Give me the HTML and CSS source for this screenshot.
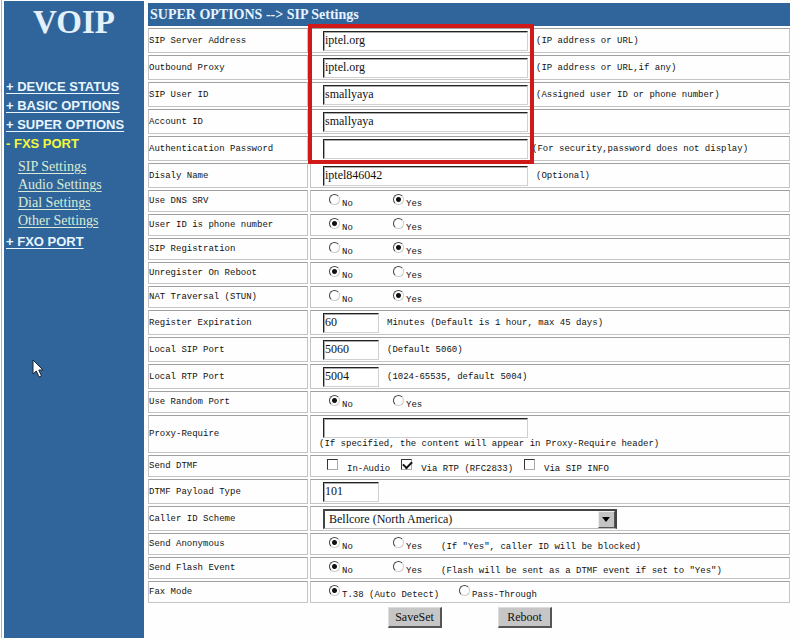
FILE: index.html
```
<!DOCTYPE html>
<html lang="en">

<head>
    <meta charset="utf-8">
    <title>VOIP - SIP Settings</title>
    <meta name="viewport" content="width=device-width, initial-scale=1">
    <link rel="stylesheet" href="styles.css">
</head>

<body>
    <div class="sidebar">
        <h1>VOIP</h1>
        <ul class="menu">
            <li><a href="#">+ DEVICE STATUS</a></li>
            <li><a href="#">+ BASIC OPTIONS</a></li>
            <li><a href="#">+ SUPER OPTIONS</a></li>
            <li><a href="#" class="current">- FXS PORT</a>
                <ul class="submenu">
                    <li><a href="#">SIP Settings</a></li>
                    <li><a href="#">Audio Settings</a></li>
                    <li><a href="#">Dial Settings</a></li>
                    <li><a href="#">Other Settings</a></li>
                </ul>
            </li>
            <li><a href="#">+ FXO PORT</a></li>
        </ul>
        <svg class="pointer" width="12" height="20" viewBox="0 0 12 20">
            <path d="M1 1v14l3.300-3 2.700 6 2.500-1-2.700-6H11z" fill="#fff" stroke="#1c2430" stroke-width="1" />
        </svg>
    </div>

    <form class="main" onsubmit="return false">
        <table class="settings">
            <tr>
                <th colspan="2">SUPER OPTIONS --&gt; SIP Settings</th>
            </tr>
            <tr class="field">
                <td><label for="server">SIP Server Address</label></td>
                <td><input type="text" class="long" id="server" value="iptel.org"><span class="hint">(IP address or URL)</span></td>
            </tr>
            <tr class="field">
                <td><label for="proxy">Outbound Proxy</label></td>
                <td><input type="text" class="long" id="proxy" value="iptel.org"><span class="hint">(IP address or URL,if any)</span></td>
            </tr>
            <tr class="field">
                <td><label for="user">SIP User ID</label></td>
                <td><input type="text" class="long" id="user" value="smallyaya"><span class="hint">(Assigned user ID or phone number)</span></td>
            </tr>
            <tr class="field">
                <td><label for="account">Account ID</label></td>
                <td><input type="text" class="long" id="account" value="smallyaya"></td>
            </tr>
            <tr class="field">
                <td><label for="password">Authentication Password</label></td>
                <td><input type="password" class="long" id="password"><span class="hint near">(For security,password does not display)</span></td>
            </tr>
            <tr class="field">
                <td><label for="name">Disaly Name</label></td>
                <td><input type="text" class="long" id="name" value="iptel846042"><span class="hint">(Optional)</span></td>
            </tr>
            <tr class="choice">
                <td>Use DNS SRV</td>
                <td>
                    <label><input type="radio" name="dns">No</label>
                    <label><input type="radio" name="dns" checked>Yes</label>
                </td>
            </tr>
            <tr class="choice">
                <td>User ID is phone number</td>
                <td>
                    <label><input type="radio" name="phone" checked>No</label>
                    <label><input type="radio" name="phone">Yes</label>
                </td>
            </tr>
            <tr class="choice">
                <td>SIP Registration</td>
                <td>
                    <label><input type="radio" name="register">No</label>
                    <label><input type="radio" name="register" checked>Yes</label>
                </td>
            </tr>
            <tr class="choice">
                <td>Unregister On Reboot</td>
                <td>
                    <label><input type="radio" name="unregister" checked>No</label>
                    <label><input type="radio" name="unregister">Yes</label>
                </td>
            </tr>
            <tr class="choice">
                <td>NAT Traversal (STUN)</td>
                <td>
                    <label><input type="radio" name="nat">No</label>
                    <label><input type="radio" name="nat" checked>Yes</label>
                </td>
            </tr>
            <tr class="field">
                <td><label for="expiration">Register Expiration</label></td>
                <td><input type="text" class="short" id="expiration" value="60"><span class="hint">Minutes (Default is 1 hour, max 45 days)</span></td>
            </tr>
            <tr class="field">
                <td><label for="sipport">Local SIP Port</label></td>
                <td><input type="text" class="short" id="sipport" value="5060"><span class="hint">(Default 5060)</span></td>
            </tr>
            <tr class="field">
                <td><label for="rtpport">Local RTP Port</label></td>
                <td><input type="text" class="short" id="rtpport" value="5004"><span class="hint">(1024-65535, default 5004)</span></td>
            </tr>
            <tr class="choice">
                <td>Use Random Port</td>
                <td>
                    <label><input type="radio" name="random" checked>No</label>
                    <label><input type="radio" name="random">Yes</label>
                </td>
            </tr>
            <tr class="require">
                <td><label for="require">Proxy-Require</label></td>
                <td>
                    <input type="text" class="long" id="require">
                    <p>(If specified, the content will appear in Proxy-Require header)</p>
                </td>
            </tr>
            <tr class="choice checks">
                <td>Send DTMF</td>
                <td>
                    <label><input type="checkbox">In-Audio</label>
                    <label><input type="checkbox" checked>Via RTP (RFC2833)</label>
                    <label><input type="checkbox">Via SIP INFO</label>
                </td>
            </tr>
            <tr class="field">
                <td><label for="payload">DTMF Payload Type</label></td>
                <td><input type="text" class="short" id="payload" value="101"></td>
            </tr>
            <tr class="field">
                <td><label for="scheme">Caller ID Scheme</label></td>
                <td>
                    <div class="select">
                        <select id="scheme">
                            <option>Bellcore (North America)</option>
                        </select>
                        <span class="arrow"></span>
                    </div>
                </td>
            </tr>
            <tr class="choice">
                <td>Send Anonymous</td>
                <td>
                    <label><input type="radio" name="anonymous" checked>No</label>
                    <label><input type="radio" name="anonymous">Yes</label>
                    <span>(If "Yes", caller ID will be blocked)</span>
                </td>
            </tr>
            <tr class="choice">
                <td>Send Flash Event</td>
                <td>
                    <label><input type="radio" name="flash" checked>No</label>
                    <label><input type="radio" name="flash">Yes</label>
                    <span>(Flash will be sent as a DTMF event if set to "Yes")</span>
                </td>
            </tr>
            <tr class="choice fax">
                <td>Fax Mode</td>
                <td>
                    <label><input type="radio" name="fax" checked>T.38 (Auto Detect)</label>
                    <label><input type="radio" name="fax">Pass-Through</label>
                </td>
            </tr>
        </table>
        <div class="buttons">
            <button type="submit">SaveSet</button>
            <button type="button">Reboot</button>
        </div>
        <div class="highlight"></div>
    </form>
</body>

</html>
```
FILE: styles.css
```
* {
    margin: 0;
    padding: 0;
    box-sizing: border-box;
}

body {
    display: flex;
    min-height: 100vh;
    margin-left: 1px;
    border-left: 1px solid #a9b4b8;
    background: #fefefe;
    color: #111;
    font-family: "Liberation Mono", monospace;
    font-size: 9px;
}

ul {
    list-style: none;
}

/* left menu */
.sidebar {
    position: relative;
    flex: 0 0 140px;
    margin: 1px 0 0 2px;
    background: #30659b;
}

.sidebar h1 {
    height: 76px;
    color: #e4f0fc;
    font: bold 33px/42px "Liberation Serif", serif;
    text-align: center;
}

.menu {
    padding-left: 2px;
    font: bold 13px/19px "Liberation Sans", sans-serif;
}

.menu a {
    color: #e8f6ff;
    text-decoration-thickness: 1px;
    text-underline-offset: 2px;
}

.menu a.current {
    color: #f4f83a;
    text-decoration: none;
}

.submenu {
    padding: 5px 0 2px 12px;
    font: 14px/18px "Liberation Serif", serif;
}

.submenu a {
    color: #d9ecd3;
}

.pointer {
    position: absolute;
    top: 358px;
    left: 28px;
}

/* settings table */
.main {
    position: relative;
    flex: 1;
    padding: 1px 8px 8px 2px;
}

.settings {
    width: 100%;
    border-spacing: 2px;
}

.settings th {
    height: 23px;
    padding-left: 2px;
    background: #30659b;
    color: #e8f4ff;
    font: bold 14px/20px "Liberation Serif", serif;
    text-align: left;
}

.settings td {
    height: 25px;
    border: 1px solid #c4c4c4;
    border-top-color: #a0a0a0;
    line-height: 12px;
    vertical-align: middle;
    white-space: nowrap;
}

.settings td:first-child {
    width: 160px;
}

.settings td:last-child {
    padding-left: 12px;
}

.settings .choice td {
    height: 22px;
}

.settings .require td {
    height: 38px;
}

.settings .require td:last-child {
    padding-left: 8px;
}

.require input {
    margin-left: 4px;
}

input[type=text],
input[type=password] {
    display: inline-block;
    height: 20px;
    padding-left: 1px;
    border: 1px solid #d0d0d0;
    border-top-color: #222;
    border-left-color: #222;
    background: #fff;
    box-shadow: inset 1px 1px #aaa;
    color: #111;
    font: 12px/16px "Liberation Serif", serif;
    vertical-align: middle;
}

input.long {
    width: 205px;
}

input.short {
    width: 56px;
}

.hint {
    margin-left: 8px;
    vertical-align: middle;
}

.hint.near {
    margin-left: 4px;
}

/* radio and checkbox rows */
.choice td:last-child {
    padding-left: 18px;
    font-size: 0;
}

.choice label,
.choice span {
    display: inline-flex;
    align-items: flex-end;
    gap: 2px;
    min-width: 64px;
    height: 16px;
    font-size: 9px;
    line-height: 10px;
    vertical-align: middle;
}

.choice label + label {
    min-width: 48px;
}

.choice input {
    width: 11px;
    height: 11px;
    margin-bottom: 4px;
    border: 1px solid #333;
    background: #fff;
    appearance: none;
}

.choice input[type=radio] {
    border-color: #444 #ccc #ccc #444;
    border-radius: 50%;
}

.choice input[type=radio]:checked {
    background: radial-gradient(circle, #111 2px, #fff 3px);
}

.settings .checks td:last-child {
    padding-left: 16px;
}

.checks label,
.checks label + label {
    gap: 9px;
    min-width: 0;
    margin-right: 11px;
}

.checks input {
    border-color: #333 #aaa #aaa #333;
}

.checks input:checked::before {
    content: "";
    display: block;
    width: 7px;
    height: 4px;
    margin: 1px;
    border: solid #111;
    border-width: 0 0 2px 2px;
    transform: rotate(-45deg);
}

.fax label {
    min-width: 130px;
}

.select {
    position: relative;
    width: 294px;
    height: 20px;
}

.select select {
    width: 100%;
    height: 20px;
    padding-left: 4px;
    border: 2px solid #444;
    border-bottom: 1px solid #bbb;
    background: #fff;
    color: #111;
    font: 12px/16px "Liberation Serif", serif;
    appearance: none;
}

.arrow {
    position: absolute;
    top: 2px;
    right: 2px;
    width: 17px;
    height: 17px;
    border: 1px solid #555;
    border-top-color: #eee;
    border-left-color: #eee;
    background: #c4c4c4;
    pointer-events: none;
}

.arrow::before {
    content: "";
    position: absolute;
    top: 5px;
    left: 3px;
    border: 4px solid transparent;
    border-top: 5px solid #000;
    border-bottom: 0;
}

.buttons {
    display: flex;
    justify-content: center;
    gap: 56px;
    margin-top: 2px;
    padding-left: 2px;
}

button {
    width: 54px;
    height: 21px;
    border: 1px solid #ddd;
    border-right: 2px solid #555;
    border-bottom: 2px solid #555;
    background: #c6c6c6;
    color: #111;
    font: 12px/16px "Liberation Serif", serif;
}

/* red frame round the account fields */
.highlight {
    position: absolute;
    top: 24px;
    left: 164px;
    width: 226px;
    height: 140px;
    border: 4px solid #d01a1a;
    pointer-events: none;
}
```
